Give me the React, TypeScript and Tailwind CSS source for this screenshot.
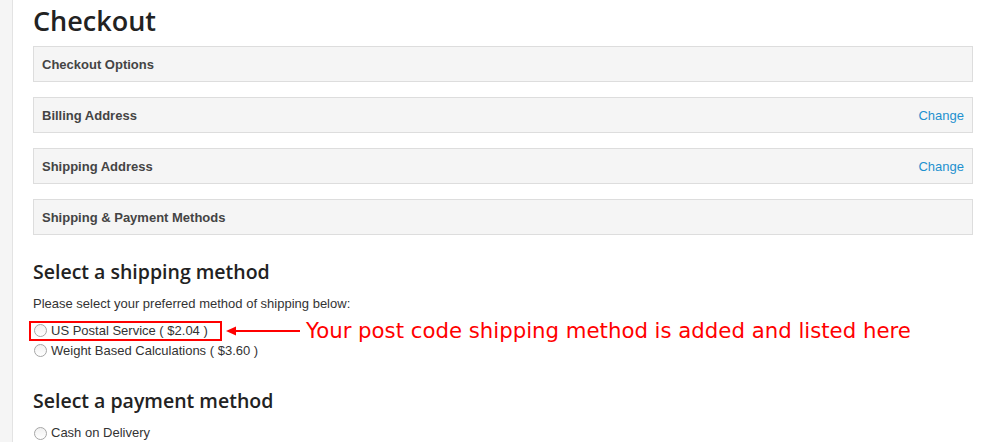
import React from "react";

const Radio = () => (
  <span className="inline-block w-[13px] h-[13px] rounded-full border border-[#a6a6a6] bg-gradient-to-b from-[#f0f0f0] to-white shrink-0" />
);

const Panel = ({ title, change }: { title: string; change?: boolean }) => (
  <div className="h-[36px] bg-[#f5f5f5] border border-[#dddddd] flex items-center justify-between px-[8px] mb-[15px]">
    <span className="font-bold text-[13px] text-[#444] pt-[1px]">{title}</span>
    {change && <span className="text-[13px] text-[#1e91cf] pt-[1px]">Change</span>}
  </div>
);

export default function App() {
  return (
    <div className="flex w-[987px] h-[442px] overflow-hidden bg-white" style={{ fontFamily: '"Liberation Sans", Arial, sans-serif' }}>
      <div className="w-[13px] shrink-0 bg-[#f5f5f5] border-r border-[#e3e3e3]" />
      <div className="pl-[20px] w-[960px] shrink-0">
        <h1 className="text-[27px] font-semibold text-[#222] leading-none pt-[7px] pb-[12px]" style={{ fontFamily: '"Open Sans", sans-serif' }}>
          Checkout
        </h1>
        <Panel title="Checkout Options" />
        <Panel title="Billing Address" change />
        <Panel title="Shipping Address" change />
        <Panel title="Shipping & Payment Methods" />
        <h2 className="text-[19.5px] font-semibold text-[#222] leading-none mt-[27px]" style={{ fontFamily: '"Open Sans", sans-serif' }}>
          Select a shipping method
        </h2>
        <p className="text-[13px] text-[#333] mt-[13px] leading-[18px]">Please select your preferred method of shipping below:</p>
        <div className="flex items-center mt-[8px] h-[20px]">
          <div className="ml-[-4px] flex items-center gap-[4px] border-2 border-[#ff0000] h-[20px] pl-[3px] w-[193px]">
            <Radio />
            <span className="text-[13px] text-[#333] leading-[16px]">US Postal Service ( $2.04 )</span>
          </div>
          <svg width="78" height="12" viewBox="0 0 78 12" className="ml-[3px]">
            <line x1="8" y1="6" x2="75" y2="6" stroke="#ff0000" strokeWidth="2" />
            <polygon points="1,6 11,1.5 11,10.5" fill="#ff0000" />
          </svg>
          <span className="text-[21.25px] text-[#ff0000] ml-[3px] leading-none" style={{ fontFamily: '"DejaVu Sans", sans-serif' }}>
            Your post code shipping method is added and listed here
          </span>
        </div>
        <div className="flex items-center gap-[4px] h-[20px] pl-[1px]">
          <Radio />
          <span className="text-[13px] text-[#333] leading-[16px]">Weight Based Calculations ( $3.60 )</span>
        </div>
        <h2 className="text-[19.5px] font-semibold text-[#222] leading-none mt-[30px]" style={{ fontFamily: '"Open Sans", sans-serif' }}>
          Select a payment method
        </h2>
        <div className="flex items-center gap-[4px] mt-[13px] h-[20px] pl-[1px]">
          <Radio />
          <span className="text-[13px] text-[#333] leading-[16px]">Cash on Delivery</span>
        </div>
      </div>
    </div>
  );
}
